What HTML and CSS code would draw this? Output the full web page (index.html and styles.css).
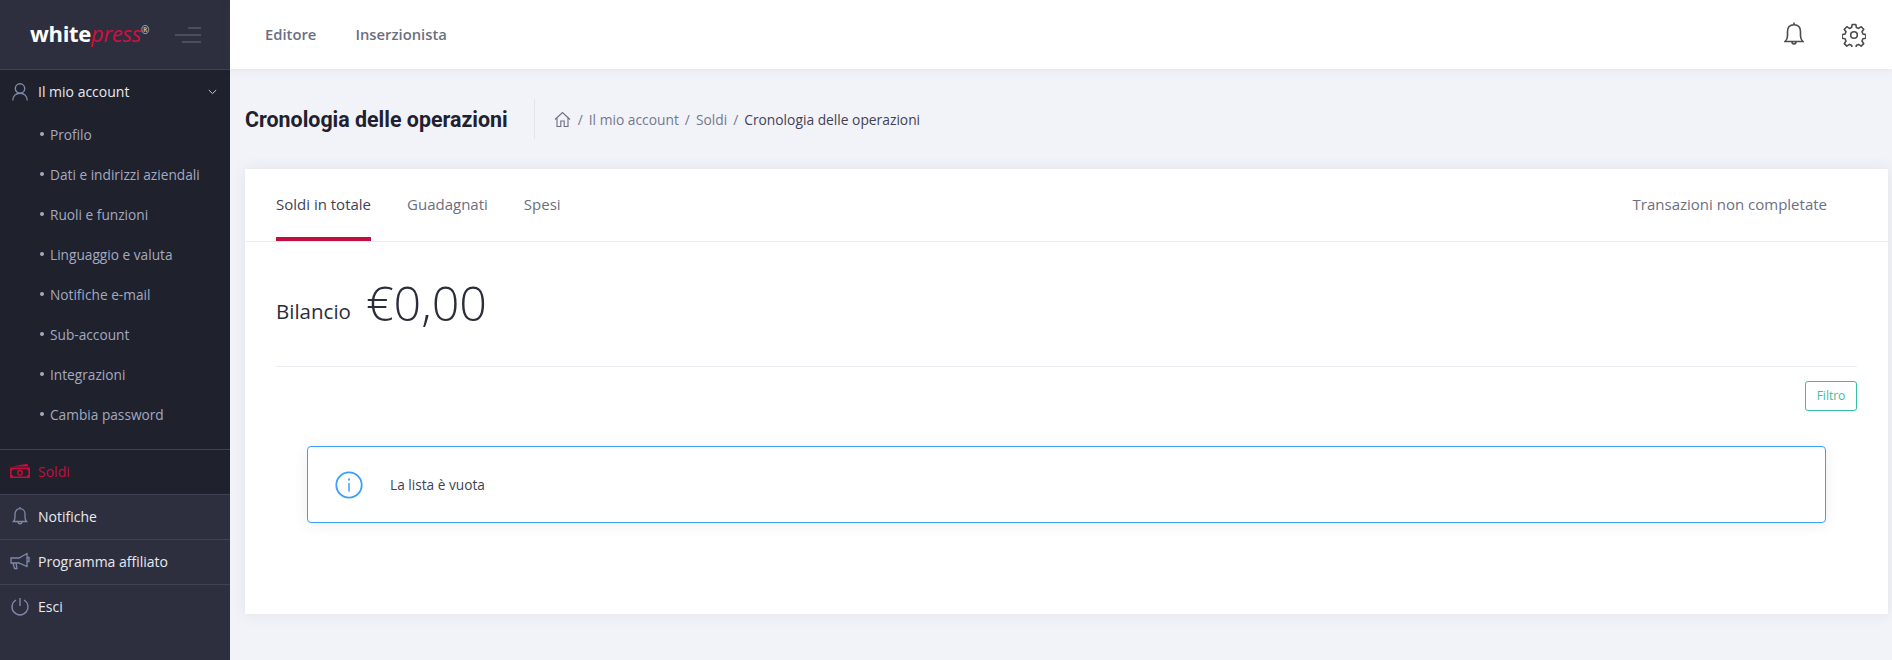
FILE: index.html
```html
<!DOCTYPE html>
<html lang="it">
<head>
<meta charset="utf-8">
<title>Cronologia delle operazioni</title>
<link rel="stylesheet" href="styles.css">
</head>
<body>
<div class="app">
  <aside class="sidebar">
    <div class="brand">
      <div class="logo"><span class="logo-a">white</span><span class="logo-b">press</span><sup class="logo-r">®</sup></div>
      <svg class="burger" width="28" height="16" viewBox="0 0 28 16"><path d="M14 1h13M1 8h26M8 15h19" fill="none" stroke="#6b6f82" stroke-width="1"/></svg>
    </div>
    <nav>
      <div class="group">
        <div class="item">
          <svg class="ico" width="20" height="20" viewBox="0 0 20 20" fill="none" stroke="#7f88a8" stroke-width="1.4"><circle cx="10" cy="6.5" r="4.7"/><path d="M2.8 18.5c0-4.6 3-7.3 7.2-7.3s7.200 2.700 7.200 7.300"/></svg>
          <span class="item-label">Il mio account</span>
          <svg class="chev" width="9" height="6" viewBox="0 0 9 6"><path d="M.8 1l3.7 3.6L8.2 1" fill="none" stroke="#c9cede" stroke-width="1"/></svg>
        </div>
        <ul class="sub">
          <li>Profilo</li>
          <li>Dati e indirizzi aziendali</li>
          <li>Ruoli e funzioni</li>
          <li>Linguaggio e valuta</li>
          <li>Notifiche e-mail</li>
          <li>Sub-account</li>
          <li>Integrazioni</li>
          <li>Cambia password</li>
        </ul>
      </div>
      <div class="item row active">
        <svg class="ico" width="20" height="16" viewBox="0 0 20 16"><path d="M1.500 3.600 17.500.8l.8 2.800z" fill="#c30e3d"/><path fill-rule="evenodd" d="M0 4.500h20V15H0zM3.500 6.100 1.600 8v3.500l1.900 1.900h13l1.900-1.900V8l-1.900-1.900zM10 6.800a3 3 0 1 1 0 6 3 3 0 0 1 0-6zm0 1.400a1.600 1.600 0 1 0 0 3.200 1.600 1.600 0 0 0 0-3.200z" fill="#c30e3d"/></svg>
        <span class="item-label">Soldi</span>
      </div>
      <div class="item row">
        <svg class="ico" width="20" height="20" viewBox="0 0 20 20" fill="none" stroke="#7f88a8" stroke-width="1.300"><path d="M3.500 15.500c1.200-1.200 1.500-2.500 1.500-4.500V8c0-3 2-5.300 5-5.300S15 5 15 8v3c0 2 .3 3.300 1.500 4.500z"/><path d="M10 2.700V1M8 15.500c0 3 4 3 4 0"/></svg>
        <span class="item-label">Notifiche</span>
      </div>
      <div class="item row">
        <svg class="ico" width="20" height="18" viewBox="0 0 20 18" fill="none" stroke="#7f88a8" stroke-width="1.300"><path d="M1 6h8l8-4.500v13L9 11H1zM3 11l1.500 5.500H7L6 11M17 5.500h2v4h-2"/></svg>
        <span class="item-label">Programma affiliato</span>
      </div>
      <div class="item row">
        <svg class="ico" width="20" height="20" viewBox="0 0 20 20" fill="none" stroke="#7f88a8" stroke-width="1.400"><path d="M6 3a8 8 0 1 0 8 0M10 1v8"/></svg>
        <span class="item-label">Esci</span>
      </div>
    </nav>
  </aside>

  <div class="main">
    <header class="topbar">
      <a class="top-link">Editore</a>
      <a class="top-link">Inserzionista</a>
      <div class="top-icons">
        <svg width="20" height="26" viewBox="0 0 20 26" fill="none" stroke="#4c4c4c" stroke-width="1.600"><path d="M1 20.500c1.500-1.200 2.500-3 2.500-5.500V10.500c0-4.200 2.500-6.800 6.500-6.800s6.500 2.600 6.500 6.800V15c0 2.500 1 4.300 2.500 5.500z"/><path d="M10 3.700V1.500M8 20.500c0 3.200 4 3.200 4 0"/></svg>
        <svg width="24" height="24" viewBox="0 0 24 24" fill="none" stroke="#4c4c4c" stroke-width="1.600" stroke-linejoin="round"><circle cx="12" cy="12" r="3.300"/><path d="M10.200 1.500h3.600l.6 3 2.200.9 2.600-1.700 2.500 2.500-1.700 2.600.9 2.200 3 .6v3.600l-3 .6-.9 2.200 1.700 2.600-2.500 2.500-2.600-1.700-2.200.9-.6 3h-3.600l-.6-3-2.200-.9-2.600 1.700-2.500-2.500 1.700-2.600-.9-2.200-3-.6v-3.600l3-.6.900-2.200-1.700-2.600 2.500-2.500 2.600 1.700 2.200-.9z"/></svg>
      </div>
    </header>

    <div class="subheader">
      <h1 class="page-title">Cronologia delle operazioni</h1>
      <div class="crumbs">
        <svg width="17" height="17" viewBox="0 0 17 17" fill="none" stroke="#6b6f82" stroke-width="1.100"><path d="M1 8.500 8.500 1.500 16 8.500M3 7v8.500h3.800V10h3.400v5.500H14V7"/></svg>
        <span class="sep">/</span><span>Il mio account</span>
        <span class="sep">/</span><span>Soldi</span>
        <span class="sep">/</span><span class="crumb-current">Cronologia delle operazioni</span>
      </div>
    </div>

    <section class="card">
      <div class="tabs">
        <span class="tab tab-on">Soldi in totale</span>
        <span class="tab">Guadagnati</span>
        <span class="tab">Spesi</span>
        <span class="tab tab-right">Transazioni non completate</span>
      </div>
      <div class="card-body">
        <div class="balance">
          <span class="balance-label">Bilancio</span>
          <span class="balance-value">€0,00</span>
        </div>
        <div class="filter-row"><button class="filter">Filtro</button></div>
        <div class="alert">
          <svg width="28" height="28" viewBox="0 0 28 28" fill="none" stroke="#3a9ff5"><circle cx="14" cy="14" r="12.700" stroke-width="1.800"/><path d="M14 12v8.500" stroke-width="1.500"/><path d="M14 7.500v2" stroke-width="1.800"/></svg>
          <span class="alert-text">La lista è vuota</span>
        </div>
      </div>
    </section>
  </div>
</div>
</body>
</html>
```
FILE: styles.css
```css
* { box-sizing: border-box; }
html, body { margin: 0; height: 100%; }
body {
  font-family: "Open Sans", "Liberation Sans", sans-serif;
  background: #f2f3f8;
  color: #3f4254;
  overflow: hidden;
}
.app { display: flex; height: 660px; }

.sidebar { width: 230px; flex: none; background: #2d2f3e; color: #fff; }
.brand {
  height: 70px;
  display: flex;
  align-items: center;
  padding-left: 30px;
  border-bottom: 1px solid #3f4252;
}
.logo { width: 144px; font-size: 22px; line-height: 24px; margin-top: -4px; white-space: nowrap; letter-spacing: -.3px; }
.logo-a { font-weight: 700; color: #fff; }
.logo-b { font-style: italic; font-weight: 400; color: #d0103f; }
.logo-r { font-size: 10px; color: #d6d8e0; vertical-align: 8px; line-height: 0; }
.burger { flex: none; }

.group { background: #1f212d; border-bottom: 1px solid #3f4252; height: 380px; }
.item { display: flex; align-items: center; height: 43px; padding-left: 10px; font-size: 14px; }
.row { height: 45px; padding-bottom: 2px; border-bottom: 1px solid #3f4252; }
.row:last-child { border-bottom: 0; }
.ico { flex: none; width: 20px; }
.item-label { margin-left: 8px; color: #e8e9f0; font-weight: 500; }
.chev { margin-left: auto; margin-right: 13px; }
.active { background: #1f212d; }
.active .item-label { color: #c30e3d; font-weight: 400; }

.sub { list-style: none; margin: 2px 0 0; padding: 0; }
.sub li { position: relative; height: 40px; line-height: 40px; padding-left: 50px; font-size: 13.700px; color: #a4a9c0; }
.sub li::before {
  content: "";
  position: absolute;
  left: 40px;
  top: 17px;
  width: 4px;
  height: 4px;
  border-radius: 50%;
  background: #a4a9c0;
}

.main { flex: 1; min-width: 0; }
.topbar {
  height: 69px;
  background: #fff;
  display: flex;
  align-items: center;
  padding: 0 26px 0 35px;
  gap: 39px;
  box-shadow: 0 1px 9px rgba(80, 85, 120, .1);
  position: relative;
}
.top-link { font-size: 14.800px; font-weight: 600; color: #6b6f82; padding-bottom: 2px; }
.top-icons { margin-left: auto; display: flex; align-items: center; gap: 38px; }
.top-icons svg:first-child { margin-top: -2px; }

.subheader { height: 100px; display: flex; align-items: center; padding-left: 15px; }
.page-title {
  margin: 0;
  font-family: Roboto, sans-serif;
  font-size: 21.400px;
  font-weight: 700;
  color: #1f2130;
  padding-right: 26px;
  height: 40px;
  line-height: 41px;
  border-right: 1px solid #e3e4ec;
}
.crumbs { display: flex; align-items: center; margin-left: 19px; font-size: 13.800px; color: #74788d; gap: 6px; }
.crumbs svg { margin-right: 1px; }
.crumb-current { color: #3f4254; }

.card {
  margin: 0 4px 0 15px;
  height: 445px;
  background: #fff;
  box-shadow: 0 0 13px rgba(80, 85, 120, .1);
}
.tabs {
  display: flex;
  height: 73px;
  padding: 0 30px 0 31px;
  gap: 36px;
  border-bottom: 1px solid #ebedf3;
}
.tab {
  height: 72px;
  line-height: 70px;
  font-size: 15px;
  color: #6b6f82;
}
.tab-on { color: #3f4254; border-bottom: 4px solid #c30e3d; }
.tab-right { margin-left: auto; margin-right: 31px; }

.card-body { padding: 0 31px; }
.balance {
  height: 125px;
  display: flex;
  align-items: center;
  gap: 15px;
  border-bottom: 1px solid #ebedf3;
}
.balance-label { font-size: 20.500px; color: #2b2d3a; margin-top: 13px; }
.balance-value { font-size: 48.500px; font-weight: 300; color: #2b2d3a; line-height: 1; margin-top: -4px; }
.filter-row { display: flex; justify-content: flex-end; margin-top: 14px; }
.filter {
  width: 52px;
  height: 30px;
  padding: 0 0 2px;
  background: #fff;
  border: 1px solid #34bfa3;
  border-radius: 3px;
  font-family: inherit;
  font-size: 12px;
  color: #34bfa3;
}
.alert {
  margin: 35px 31px 0;
  height: 77px;
  display: flex;
  align-items: center;
  padding-left: 27px;
  background: #fff;
  border: 1px solid #3a9ff5;
  border-radius: 4px;
  box-shadow: 0 2px 14px rgba(80, 85, 120, .1);
}
.alert-text { margin-left: 27px; font-size: 13.700px; color: #3f4254; }
```
